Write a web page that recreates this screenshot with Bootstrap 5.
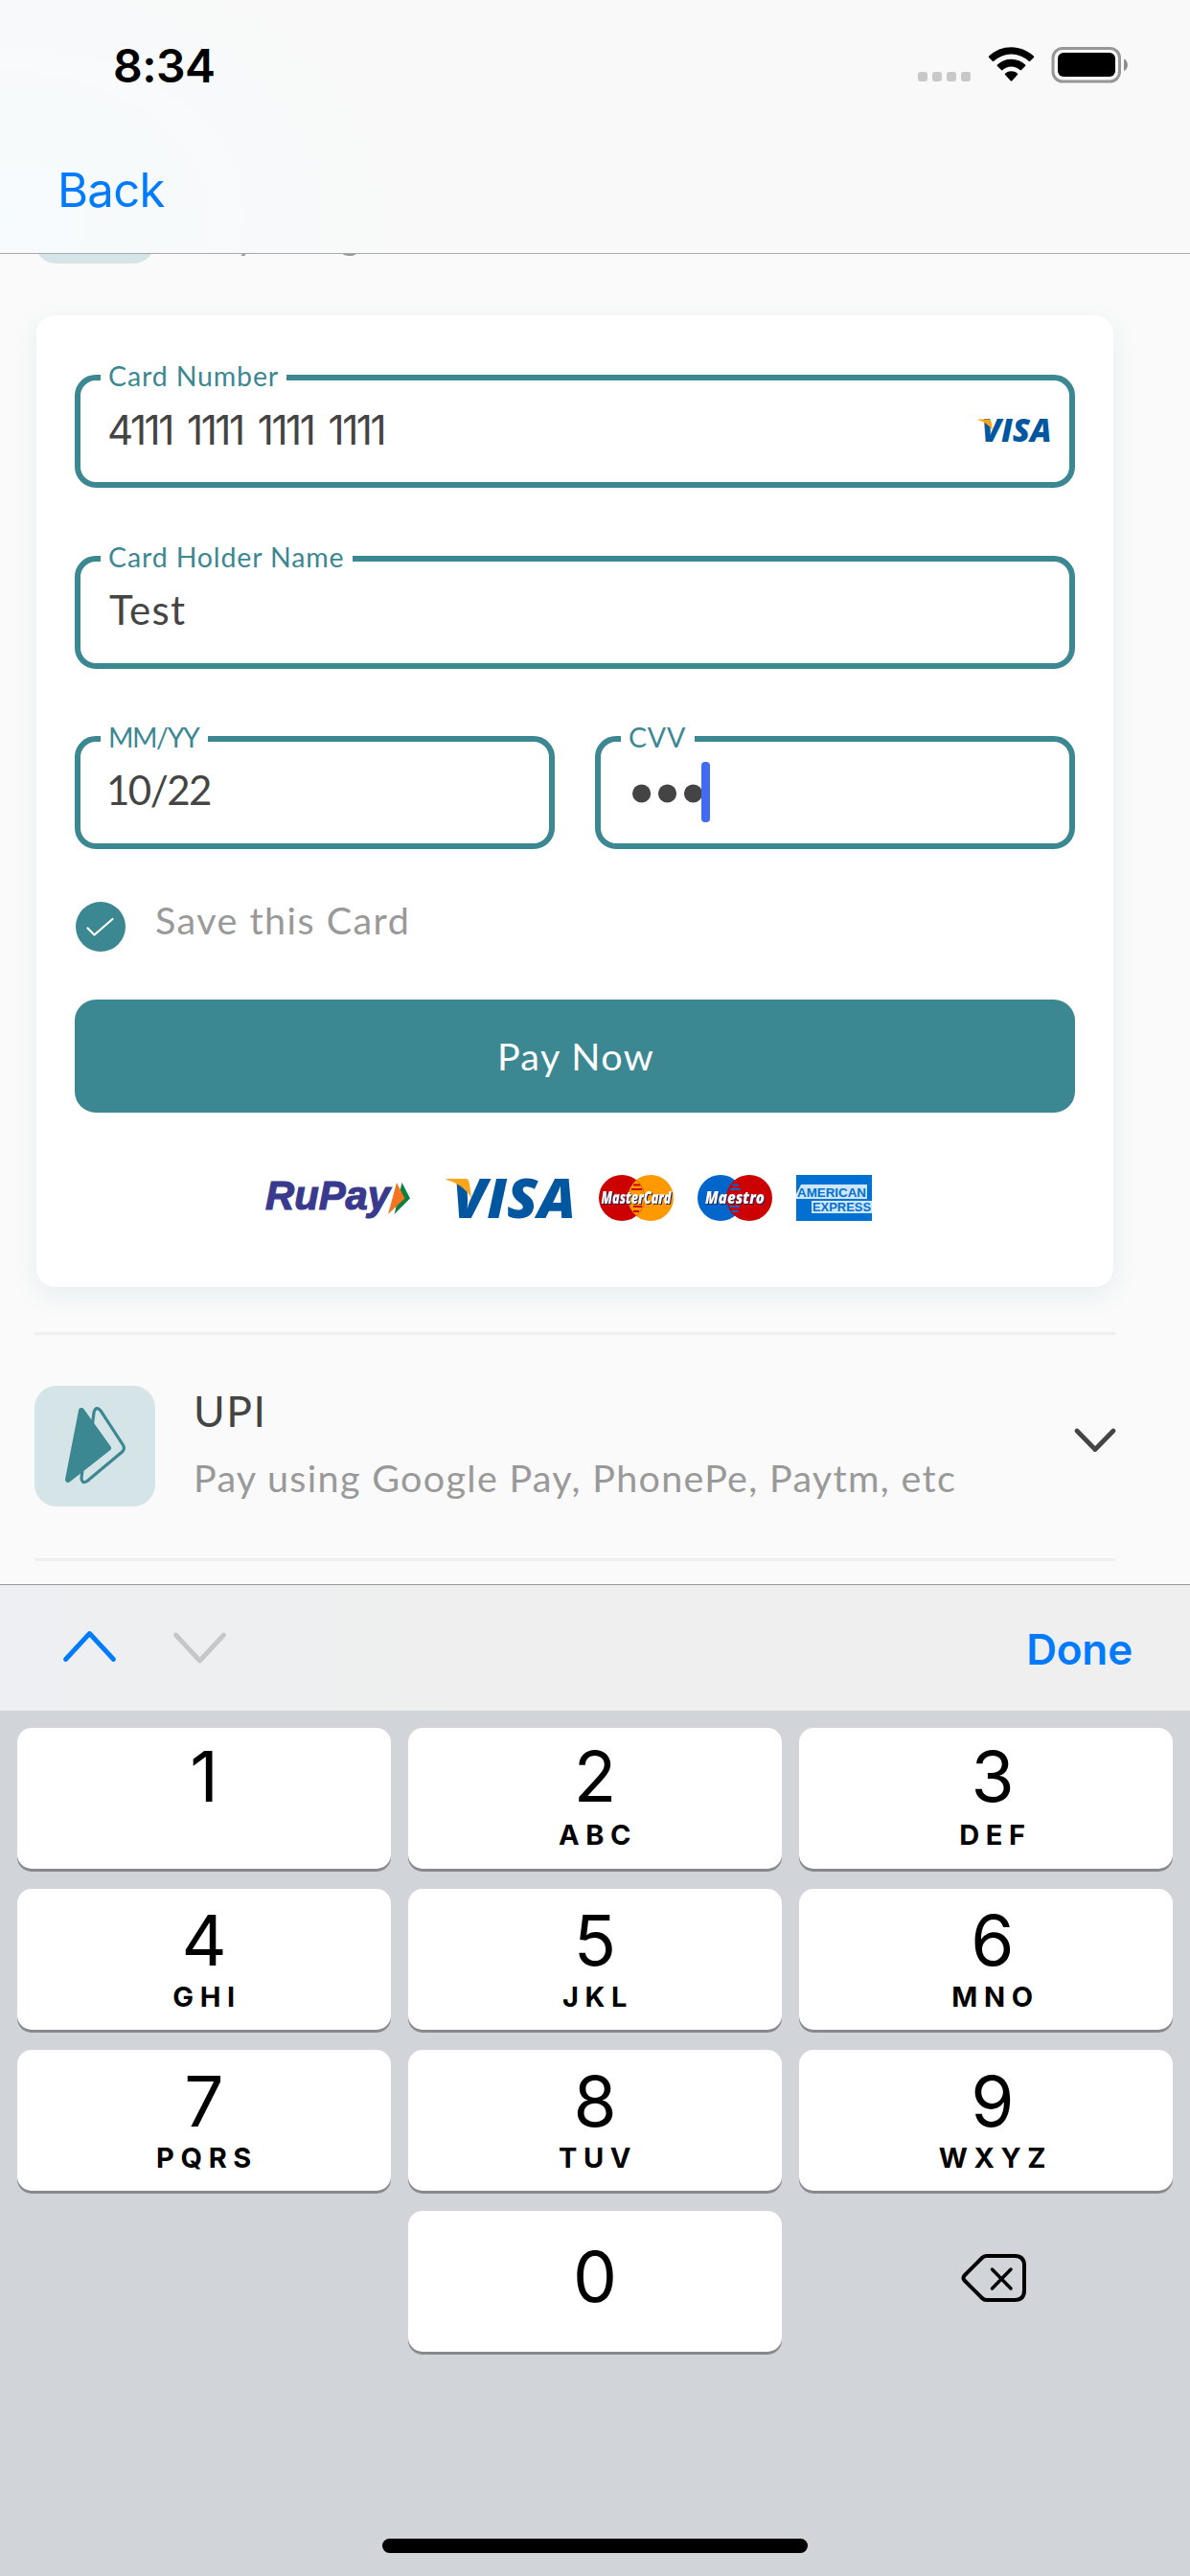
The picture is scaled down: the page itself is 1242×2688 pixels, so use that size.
<!DOCTYPE html>
<html lang="en">
<head>
<meta charset="utf-8">
<meta name="viewport" content="width=device-width, initial-scale=1">
<title>Card payment</title>
<link href="https://cdn.jsdelivr.net/npm/bootstrap@5.3.0/dist/css/bootstrap.min.css" rel="stylesheet">
<style>
:root { --teal: #3b8792; --ios-blue: #007aff; --ink: #444; --muted-ink: #999; }
body { height: 2688px; background: #fafafa; font-family: Lato, "Open Sans", sans-serif; color: var(--ink); }
.ios { font-family: Inter, Roboto, sans-serif; }
svg { display: block; flex: none; overflow: visible; }
/* top chrome */
.app-head { height: 265px; border-bottom: 1px solid #a9a9aa; background: radial-gradient(ellipse 420px 300px at 0 230px, #f6fbfd, #f9f9f9); z-index: 2; }
.status-row { height: 132px; padding: 38px 65px 0 118px; }
.clock { font-size: 48px; font-weight: 600; line-height: 61px; letter-spacing: -.52px; color: #000; }
.back-link { height: 132px; padding-left: 60px; font-size: 49px; line-height: 133px; letter-spacing: -.7px; color: var(--ios-blue); }
/* scrolled page */
.page-body { height: 1388px; padding: 0 78px 0 36px; }
.scrolled { margin-top: -116px; }
.method { gap: 40px; }
.method-icon { width: 126px; height: 126px; border-radius: 23px; background: #d5e4e6; flex: none; }
.method-title { font-size: 44.5px; line-height: 52px; letter-spacing: 1.5px; }
.method-sub { font-size: 39.5px; line-height: 46px; letter-spacing: 1.31px; margin-top: 21px; color: var(--muted-ink); white-space: nowrap; }
.scrolled .method-sub { margin-top: 73px; }
.method-line { border-top: 3px solid #efefef; padding-top: 53px; height: 236px; }
.last-line { border-top: 3px solid #efefef; }
.pay-card { margin: 54px 2px 47px; padding: 62px 40px 0; height: 1014px; border: 0; border-radius: 20px; box-shadow: 0 8px 26px rgba(59,135,146,.1); }
.outlined { position: relative; height: 118px; border: 6px solid var(--teal); border-radius: 22px; padding: 0 0 6px 30px; font-size: 42px; letter-spacing: 1.3px; }
.outlined label { position: absolute; left: 21px; top: -20px; padding: 0 0 0 8px; background: #fff; color: var(--teal); font: 400 28.5px/30px Lato, sans-serif; letter-spacing: .87px; word-spacing: 0; white-space: nowrap; }
.digits { padding-bottom: 3px; padding-left: 28px; letter-spacing: -2.4px; word-spacing: 5.6px; }
.mt-field { margin-top: 71px; }
.half-row { margin-top: 70px; gap: 42px; }
.expiry { padding-left: 27px; letter-spacing: -1.5px; }
.expiry label { letter-spacing: -1.4px; }
.cvv { padding: 0 0 0 33px; }
.visa-small { margin: 1px 19px 0 0; }
.save-row { margin-top: 55px; height: 52px; padding-left: 1px; }
.save-row span { margin-left: 31px; padding-bottom: 14px; font-size: 39.5px; letter-spacing: 1.46px; color: var(--muted-ink); }
.btn-pay { margin-top: 50px; height: 118px; border-radius: 22px; background: var(--teal); color: #fff; font-size: 39.5px; letter-spacing: 1.4px; padding: 0 0 1px 2px; border: 0; }
.brands { margin-top: 65px; padding-left: 199px; gap: 25px; }
.brand-word { filter: drop-shadow(1px 1px 0 #222255); }
/* keyboard */
.kb-bar { height: 132px; border-top: 1px solid #97979a; background: linear-gradient(90deg, #edeff2, #efefef 40%); padding: 0 60px 0 66px; }
.kb-done { font-size: 44px; font-weight: 600; letter-spacing: -.16px; line-height: 60px; padding-top: 2px; color: var(--ios-blue); }
.kb-pad { height: 903px; background: #d1d4d9; padding-top: 18px; position: relative; }
.kb-grid { display: grid; grid-template-columns: repeat(3, 390px); grid-auto-rows: 147px; gap: 21px 18px; padding-left: 18px; color: #000; }
.key { background: #fff; border-radius: 15px; box-shadow: 0 3px 0 #88898d; padding-top: 14px; text-align: center; }
.key b { display: block; font-weight: 400; font-size: 73px; line-height: 80px; margin-bottom: 4px; }
.key i { display: block; font-style: normal; font-weight: 700; font-size: 29px; line-height: 30px; letter-spacing: 6.6px; padding-left: 6px; }
.key.top { padding-top: 11px; }
.key.top b { margin-bottom: 6px; }
.key.zero { padding-top: 29px; }
.key.third { padding-left: 14px; }
.home-bar { position: absolute; left: 399px; bottom: 24px; width: 444px; height: 15px; border-radius: 8px; background: #000; }
</style>
<script src="https://cdn.jsdelivr.net/npm/bootstrap@5.3.0/dist/js/bootstrap.bundle.min.js"></script>
</head>
<body class="d-flex flex-column overflow-hidden">

<header class="app-head ios position-relative flex-shrink-0">
  <div class="status-row d-flex justify-content-between">
    <span class="clock">8:34</span>
    <svg width="222" height="60" viewBox="955 38 222 60">
      <g fill="#c8c8c8"><rect x="958" y="75" width="10" height="10" rx="3"/><rect x="973" y="75" width="10" height="10" rx="3"/><rect x="988" y="75" width="10" height="10" rx="3"/><rect x="1003" y="75" width="10" height="10" rx="3"/></g>
      <path d="M1055.500 49.200c9 0 17.300 3.600 23.400 9.400.500.500.500 1 0 1.500l-3.700 3.700c-.500.500-1 .500-1.500 0a26.500 26.500 0 0 0-36.400 0c-.500.500-1 .500-1.500 0l-3.700-3.700c-.500-.500-.500-1 0-1.500a34 34 0 0 1 23.400-9.400zM1055.500 61.800c5.600 0 10.700 2.200 14.500 5.700.600.500.600 1.100 0 1.600l-4 4c-.500.500-1 .500-1.500 0a13.300 13.300 0 0 0-18 0c-.500.500-1 .500-1.500 0l-4-4c-.600-.500-.600-1.100 0-1.600a21.300 21.300 0 0 1 14.500-5.700zM1055.500 74.200c2.400 0 4.600.900 6.300 2.300.600.500.600 1.100.100 1.600l-5.600 6.200c-.500.600-1.100.600-1.600 0l-5.600-6.200c-.500-.500-.500-1.100.100-1.600a9.700 9.700 0 0 1 6.300-2.300z"/>
      <rect x="1099" y="50.500" width="69.500" height="34.500" rx="10" fill="none" stroke="#979797" stroke-width="3"/>
      <rect x="1104" y="55" width="60" height="25" rx="6"/>
      <path d="M1173 61.500a7 7 0 0 1 0 12.500z" fill="#8c8c8c"/>
    </svg>
  </div>
  <div class="back-link">Back</div>
</header>

<main class="page-body overflow-hidden flex-shrink-0">
  <div class="method scrolled d-flex">
    <div class="method-icon"></div>
    <div class="method-sub">Pay using</div>
  </div>

  <section class="card pay-card">
    <div class="outlined digits ios d-flex align-items-center justify-content-between">
      <label style="width:194px">Card Number</label>
      <span>4111 1111 1111 1111</span>
      <svg width="76" height="25" viewBox="0 0 133 43" preserveAspectRatio="none" class="visa-small">
        <text x="6" y="42" font-family="Open Sans" font-weight="800" font-style="italic" font-size="57" letter-spacing="0" fill="#00579f" textLength="128" lengthAdjust="spacingAndGlyphs">VISA</text>
        <path d="M0 1H20Q23 1 24 6L26 21Q18 7 0 2Z" fill="#faa61a"/>
      </svg>
    </div>
    <div class="outlined mt-field d-flex align-items-center">
      <label style="width:263px">Card Holder Name</label>
      <span>Test</span>
    </div>
    <div class="half-row d-flex">
      <div class="outlined expiry flex-fill w-50 d-flex align-items-center">
        <label style="width:112px">MM/YY</label>
        <span>10/22</span>
      </div>
      <div class="outlined cvv flex-fill w-50 d-flex align-items-center">
        <label style="width:77px">CVV</label>
        <svg width="82" height="64" viewBox="0 0 82 64"><g fill="#444"><circle cx="9.600" cy="33" r="9.600"/><circle cx="36.500" cy="33" r="9.600"/><circle cx="63.500" cy="33" r="9.600"/></g><rect x="72" width="9" height="63" rx="4" fill="#426bf2"/></svg>
      </div>
    </div>
    <div class="save-row d-flex align-items-center">
      <svg width="52" height="52" viewBox="0 0 52 52"><circle cx="26" cy="26" r="26" fill="#3b8792"/><path d="M12.500 27.500L19.500 34.500 38.500 18" fill="none" stroke="#fff" stroke-width="2.200" stroke-linecap="round" stroke-linejoin="round"/></svg>
      <span>Save this Card</span>
    </div>
    <button class="btn btn-pay w-100" type="button">Pay Now</button>
    <div class="brands d-flex">
      <svg width="152" height="48" viewBox="0 0 152 48" style="margin-right:12px">
        <text x="0" y="35.500" font-family="Liberation Sans" font-weight="700" font-style="italic" font-size="42" fill="#393a8e" stroke="#393a8e" stroke-width="1.200" textLength="130" lengthAdjust="spacingAndGlyphs">RuPay</text>
        <path d="M142.500 8L151 24.500 134.500 41z" fill="#0b8043"/><path d="M137 8L145.500 24.500 128 41z" fill="#f47421"/>
      </svg>
      <svg width="134" height="48" viewBox="0 -3 134 48">
        <text x="6" y="42" font-family="Open Sans" font-weight="800" font-style="italic" font-size="57" fill="#00579f" textLength="129" lengthAdjust="spacingAndGlyphs">VISA</text>
        <path d="M0 1H20Q23 1 24 6L26 21Q18 7 0 2Z" fill="#faa61a"/>
      </svg>
      <svg width="78" height="48" viewBox="0 0 78 48">
        <circle cx="54" cy="24" r="24" fill="#ff9900"/><circle cx="24" cy="24" r="24" fill="#cc0000"/>
        <path d="M39 5.500a24 24 0 0 0 0 37 24 24 0 0 0 0-37z" fill="#ff9900"/>
        <path d="M36 10.500h7M34 15h11M36 33h9M36 38h6" stroke="#cc0000" stroke-width="2.200"/>
        <text class="brand-word" x="2.500" y="30" font-family="Open Sans" font-weight="800" font-style="italic" font-size="17" fill="#fff" textLength="73" lengthAdjust="spacingAndGlyphs">MasterCard</text>
      </svg>
      <svg width="78" height="48" viewBox="0 0 78 48">
        <circle cx="24" cy="24" r="24" fill="#0066cc"/><circle cx="54" cy="24" r="24" fill="#cc0000"/>
        <path d="M36 10.500h7M34 15h11M33 33h11M36 38h7" stroke="#0066cc" stroke-width="2.200"/>
        <text class="brand-word" x="8" y="30" font-family="Open Sans" font-weight="800" font-style="italic" font-size="17.500" fill="#fff" textLength="62" lengthAdjust="spacingAndGlyphs">Maestro</text>
      </svg>
      <svg width="79" height="48" viewBox="0 0 79 48">
        <rect width="79" height="48" fill="#0070d2"/>
        <g fill="#cfe6fa"><path d="M5 10H74V25H0V20z"/><path d="M16 27H79V40H16z"/></g>
        <g font-family="Liberation Sans" font-weight="700" font-size="13.500" fill="#0070d2"><text x="1" y="22.500" textLength="72" lengthAdjust="spacingAndGlyphs">AMERICAN</text><text x="17" y="38.300" textLength="61" lengthAdjust="spacingAndGlyphs">EXPRESS</text></g>
      </svg>
    </div>
  </section>

  <section class="method method-line d-flex">
    <div class="method-icon">
      <svg width="126" height="126" viewBox="0 0 126 126"><path d="M60.500 40L62 27.500Q64.500 20.500 69 26L92.500 62Q94.500 65.500 92 68.500L55 99.500Q49.500 103 49 96L50 88" fill="none" stroke="#3b8792" stroke-width="3.200"/><path d="M49 26L77 65 35 98z" fill="#3b8792" stroke="#3b8792" stroke-width="6" stroke-linejoin="round"/></svg>
    </div>
    <div class="flex-fill">
      <div class="method-title">UPI</div>
      <div class="method-sub">Pay using Google Pay, PhonePe, Paytm, etc</div>
    </div>
    <svg width="42" height="26" viewBox="0 0 42 26" style="margin-top:44px"><path d="M2 3L21 22.500 40 3" fill="none" stroke="#444" stroke-width="4.800" stroke-linecap="round" stroke-linejoin="round"/></svg>
  </section>
  <div class="last-line"></div>
</main>

<div class="kb-bar ios d-flex align-items-center flex-shrink-0">
  <svg width="171" height="36" viewBox="0 1 171 36">
    <g fill="none" stroke-width="4.800" stroke-linecap="round" stroke-linejoin="round"><path d="M2.500 30.500L27.500 3.500 52.500 30.500" stroke="#007aff"/><path d="M117.500 5L142.500 32 167.500 5" stroke="#c7c7c8"/></g>
  </svg>
  <span class="kb-done ms-auto">Done</span>
</div>

<div class="kb-pad ios flex-shrink-0">
  <div class="kb-grid">
    <div class="key top"><b>1</b></div>
    <div class="key top"><b>2</b><i>ABC</i></div>
    <div class="key top third"><b>3</b><i>DEF</i></div>
    <div class="key"><b>4</b><i>GHI</i></div>
    <div class="key"><b>5</b><i>JKL</i></div>
    <div class="key third"><b>6</b><i>MNO</i></div>
    <div class="key"><b>7</b><i>PQRS</i></div>
    <div class="key"><b>8</b><i>TUV</i></div>
    <div class="key third"><b>9</b><i>WXYZ</i></div>
    <div></div>
    <div class="key zero"><b>0</b></div>
    <div class="d-flex justify-content-center align-items-center">
      <svg width="69" height="52" viewBox="0 0 69 52" style="margin:0 0 7px 17px"><g fill="none" stroke="#000" stroke-linecap="round" stroke-linejoin="round"><path d="M26.500 3H56Q66 3 66 13V39Q66 49 56 49H26.500Q24 49 22 47L3.500 28.500Q1.500 26 3.500 23.500L22 5Q24 3 26.500 3Z" stroke-width="4"/><path d="M32.500 17L52 37M52 17L32.500 37" stroke-width="3.500"/></g></svg>
    </div>
  </div>
  <div class="home-bar"></div>
</div>
</body>
</html>
